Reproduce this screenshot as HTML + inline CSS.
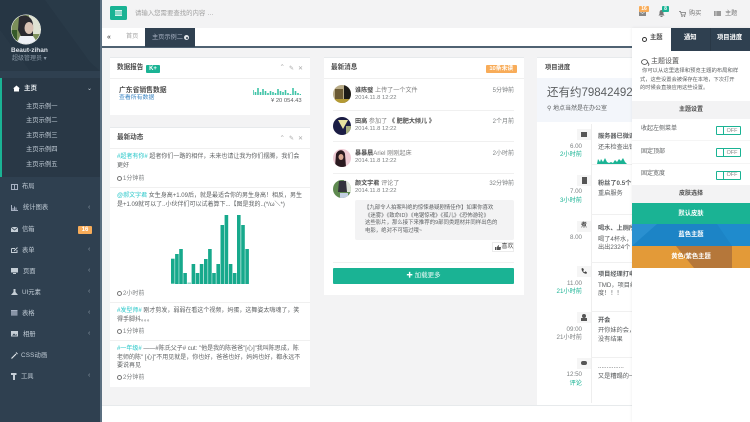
<!DOCTYPE html>
<html><head><meta charset="utf-8">
<style>
html,body{margin:0;padding:0;width:750px;height:422px;overflow:hidden;background:#f3f3f4}
body{position:relative;font-family:"Liberation Sans","Noto Sans CJK SC",sans-serif;font-size:6px;color:#5c5f61;filter:blur(.3px)}
div,span.t,svg{position:absolute}
.t{position:absolute;white-space:nowrap;line-height:10px;height:10px}
.m{color:#c0cbd5;font-size:6.3px}
.b{font-weight:bold}
.c{color:#23c6c8}
.g{color:#1ab394}
.tm{color:#7d8082}
.r{text-align:right}
.w{background:#fff}
.hd{font-size:7px;color:#4c4c4c;font-weight:bold}
.ar{color:#8a97a3;font-size:7px}
.lg{background:#f0f0f0;height:1px}
.ck{display:inline-block;width:3px;height:3px;border:1px solid #777;border-radius:50%;margin-right:1px;vertical-align:-.5px}
</style></head><body>
<!-- sidebar -->
<div style="left:0;top:0;width:100px;height:422px;background:#2f4050"></div>
<svg style="left:0;top:0" width="100" height="71"><rect width="100" height="71" fill="#263644"/><polygon points="45,0 100,0 100,71 90,62" fill="#293a48"/><polygon points="0,30 30,71 0,71" fill="#293947"/></svg>
<div style="left:100px;top:0;width:1.5px;height:422px;background:#5b6f80"></div>
<div style="left:0;top:78px;width:100px;height:99px;background:#293846"></div>
<div style="left:0;top:78px;width:2px;height:99px;background:#1ab394"></div>
<svg style="left:11px;top:14px" width="30" height="31"><defs><clipPath id="a1"><circle cx="15" cy="15.5" r="14.5"/></clipPath></defs><circle cx="15" cy="15.5" r="15" fill="#fff"/><g clip-path="url(#a1)"><rect width="30" height="31" fill="#7c8f5a"/><rect x="18" width="12" height="20" fill="#dfe3d3"/><path d="M8 3C14-1 23 3 22 13L22 22 11 24 7 16Z" fill="#2a2a30"/><ellipse cx="18" cy="14" rx="4.5" ry="6" fill="#d9c2b4"/><path d="M5 31L9 22 22 22 28 31Z" fill="#eef0f6"/><rect y="16" width="6" height="10" fill="#355a2a"/></g></svg>
<span class="t b" style="left:11px;top:46px;font-size:6.5px;color:#dfe4ea">Beaut-zihan</span>
<span class="t" style="left:12px;top:54px;font-size:6px;color:#8b9aa8">超级管理员 ▾</span>
<svg style="left:13px;top:85px" width="7" height="7"><path d="M0 3.5L3.5 .5 7 3.5 6 3.5 6 6.5 1 6.5 1 3.5Z" fill="#fff"/></svg>
<span class="t b" style="left:24px;top:84px;font-size:6.5px;color:#e8edf1">主页</span>
<span class="t" style="left:87px;top:84px;font-size:6px;color:#c5ced6">⌄</span>
<span class="t m" style="left:26px;top:102px">主页示例一</span>
<span class="t m" style="left:26px;top:116px">主页示例二</span>
<span class="t m" style="left:26px;top:131px">主页示例三</span>
<span class="t m" style="left:26px;top:145px">主页示例四</span>
<span class="t m" style="left:26px;top:160px">主页示例五</span>
<svg style="left:11px;top:184px" width="7" height="6"><rect x=".5" y=".5" width="6" height="5" fill="none" stroke="#a7b1c2"/><path d="M3.5 0V6" stroke="#a7b1c2"/></svg>
<span class="t m" style="left:22px;top:182px">布局</span>
<svg style="left:11px;top:205px" width="7" height="6"><path d="M.5 0V5.5H7M2 5V3M3.5 5V1.5M5 5V2.5" stroke="#a7b1c2" fill="none"/></svg>
<span class="t m" style="left:23px;top:203px">统计图表</span>
<span class="t ar" style="left:88px;top:203px">‹</span>
<svg style="left:11px;top:227px" width="7" height="5"><rect width="7" height="5" fill="#c5ced6"/><path d="M0 0L3.5 3 7 0" stroke="#2f4050" fill="none" stroke-width=".7"/></svg>
<span class="t m" style="left:22px;top:224.5px">信箱</span>
<div style="left:78px;top:225.5px;width:14px;height:8px;background:#f8ac59;border-radius:1px"></div>
<span class="t b" style="left:78px;top:224.5px;width:14px;text-align:center;font-size:6px;color:#fff">16</span>
<svg style="left:11px;top:247px" width="7" height="6"><path d="M.5 1.5H4M6 3V5.5H.5V1.5M3 4L6.5.5" stroke="#c5ced6" fill="none"/></svg>
<span class="t m" style="left:22px;top:245.5px">表单</span>
<span class="t ar" style="left:88px;top:245px">‹</span>
<svg style="left:11px;top:268px" width="7" height="6"><rect width="7" height="4.5" fill="#c5ced6"/><rect x="2" y="5" width="3" height="1" fill="#c5ced6"/></svg>
<span class="t m" style="left:23px;top:266.5px">页面</span>
<span class="t ar" style="left:88px;top:266px">‹</span>
<svg style="left:11px;top:289px" width="7" height="6"><path d="M2.5 0H4.5V3L7 6H0L2.5 3Z" fill="#c5ced6"/></svg>
<span class="t m" style="left:22px;top:287.5px">UI元素</span>
<span class="t ar" style="left:88px;top:287px">‹</span>
<svg style="left:11px;top:310px" width="7" height="6"><rect width="6.5" height="5.5" fill="#a7b1c2"/><path d="M0 2H6.5M0 4H6.5" stroke="#2f4050" stroke-width=".5"/></svg>
<span class="t m" style="left:22px;top:308.5px">表格</span>
<span class="t ar" style="left:88px;top:308px">‹</span>
<svg style="left:11px;top:331px" width="7" height="6"><rect width="7" height="5.5" fill="#c5ced6"/><path d="M1 4.5L3 2.5 4.5 4 5.5 3 6 4.5Z" fill="#2f4050"/></svg>
<span class="t m" style="left:23px;top:329.5px">相册</span>
<span class="t ar" style="left:88px;top:329px">‹</span>
<svg style="left:11px;top:352px" width="7" height="7"><path d="M.5 6.5L5 2" stroke="#e0e5ea" stroke-width="1.2"/><path d="M5 .5L6.5 2" stroke="#e0e5ea"/></svg>
<span class="t m" style="left:21px;top:350.5px;letter-spacing:.2px">CSS动画</span>
<svg style="left:11px;top:373px" width="6" height="7"><path d="M0 0H5.5V2H4V7H2V2H0Z" fill="#c5ced6"/></svg>
<span class="t m" style="left:21px;top:371.5px">工具</span>
<span class="t ar" style="left:88px;top:371px">‹</span>

<!-- top bar -->
<div style="left:110px;top:6px;width:17px;height:14px;background:#1ab394;border-radius:1.5px"></div>
<svg style="left:115px;top:10px" width="7" height="6"><rect width="7" height="6" fill="#d8f2ec"/><path d="M0 2H7M0 4H7" stroke="#1ab394" stroke-width=".7"/></svg>
<span class="t" style="left:135px;top:8.5px;font-size:6.4px;color:#a0a0a0">请输入您需要查找的内容 …</span>

<!-- tabs -->
<div class="w" style="left:101.5px;top:28px;width:540px;height:18px"></div>
<div style="left:101.5px;top:46px;width:540px;height:1.5px;background:#4f6272"></div>
<span class="t b" style="left:107px;top:32.5px;font-size:7px;color:#666">«</span>
<span class="t" style="left:126px;top:32px;font-size:6.2px;color:#a7a7a7">首页</span>
<div style="left:145px;top:28px;width:50px;height:19px;background:#2f4050"></div>
<span class="t" style="left:152px;top:32.5px;font-size:6.2px;color:#a7b1c2">主页示例二</span>
<div style="left:184px;top:35px;width:5px;height:5px;border-radius:50%;background:#e4e8ec"></div>
<div style="left:185.5px;top:36.5px;width:2px;height:2px;border-radius:50%;background:#2f4050"></div>

<!-- panel 1 -->
<div class="w" style="left:110px;top:56.5px;width:200px;height:58.5px;border-top:1.5px solid #e7eaec;box-sizing:border-box"></div>
<span class="t hd" style="left:117px;top:62.5px;font-size:6.6px">数据报告</span>
<div style="left:146px;top:64.5px;width:14px;height:8px;background:#1ab394;border-radius:1px"></div>
<span class="t b" style="left:146px;top:63.5px;width:14px;text-align:center;font-size:6px;color:#fff">K+</span>
<span class="t" style="left:279.5px;top:63px;font-size:6.5px;color:#a8a8a8">⌃</span>
<span class="t" style="left:289px;top:63.5px;font-size:6px;color:#a8a8a8">✎</span>
<span class="t" style="left:298px;top:63.5px;font-size:6px;color:#a8a8a8">✕</span>
<div class="lg" style="left:110px;top:78px;width:200px"></div>
<span class="t b" style="left:119px;top:86px;font-size:6.8px;color:#4c4c4c">广东省销售数据</span>
<span class="t" style="left:119px;top:93px;font-size:5.9px;color:#3f88c5">查看所有数据</span>
<svg style="left:253px;top:86px" width="48" height="10"><path d="M0 9V4M2.500 9V6M5 9V2M7.500 9V6M10 9V3M12.500 9V5M15 9V7M17.500 9V5M20 9V6M22.500 9V7M25 9V3M27.500 9V5M30 9V6M32.500 9V4M35 9V7M37.500 9V8M40 9V2M42.500 9V5M45 9V7M47.500 9V8" stroke="#3fc3a7" stroke-width="1.6"/></svg>
<span class="t" style="left:271px;top:96px;font-size:5.8px;color:#5c5f61">¥ 20 054.43</span>

<!-- panel 2 -->
<div class="w" style="left:110px;top:126.5px;width:200px;height:260.5px;border-top:1.5px solid #e7eaec;box-sizing:border-box"></div>
<span class="t hd" style="left:117px;top:133px;font-size:6.6px">最新动态</span>
<span class="t" style="left:279.5px;top:133.500px;font-size:6.5px;color:#a8a8a8">⌃</span>
<span class="t" style="left:289px;top:134px;font-size:6px;color:#a8a8a8">✎</span>
<span class="t" style="left:298px;top:134px;font-size:6px;color:#a8a8a8">✕</span>
<div class="lg" style="left:110px;top:148px;width:200px"></div>
<span class="t" style="left:117px;top:152px"><span class="c">#超者有你#</span> 超者你们一路的相伴，未来也请让我为你们摆腾，我们会</span>
<span class="t" style="left:117px;top:161px">更好</span>
<span class="t tm" style="left:117px;top:174px"><i class="ck"></i>1分钟前</span>
<div class="lg" style="left:110px;top:187px;width:200px"></div>
<span class="t" style="left:117px;top:191px"><span class="c">@郝文字君</span> 女生身高+1.09后，就是最适合你的男生身高！相反，男生</span>
<span class="t" style="left:117px;top:199.500px">是+1.09就可以了..小伙伴们可以试着算下...【图是我的..(*/ω＼*)</span>
<svg style="left:171px;top:214px" width="80" height="70" fill="#17a98c"><g>
<rect x="0" y="44.700" width="3.600" height="25"/><rect x="4.100" y="40" width="3.600" height="30"/><rect x="8.200" y="35" width="3.600" height="35"/><rect x="12.300" y="59" width="3.600" height="11"/><rect x="16.400" y="68.500" width="3.600" height="1.500" fill="#8fd9c9"/><rect x="20.600" y="50" width="3.600" height="20"/><rect x="24.700" y="59" width="3.600" height="11"/><rect x="28.800" y="50" width="3.600" height="20"/><rect x="33" y="45" width="3.600" height="25"/><rect x="37.100" y="35" width="3.600" height="35"/><rect x="41.200" y="59" width="3.600" height="11"/><rect x="45.400" y="50" width="3.600" height="20"/><rect x="49.500" y="11" width="3.600" height="59"/><rect x="53.600" y="1" width="3.600" height="69"/><rect x="57.800" y="50" width="3.600" height="20"/><rect x="61.900" y="59" width="3.600" height="11"/><rect x="66" y="1" width="3.600" height="69"/><rect x="70.200" y="11" width="3.600" height="59"/><rect x="74.300" y="35" width="3.600" height="35"/></g></svg>
<span class="t tm" style="left:117px;top:289px"><i class="ck"></i>2小时前</span>
<div class="lg" style="left:110px;top:302px;width:200px"></div>
<span class="t" style="left:117px;top:306px"><span class="c">#发型师#</span> 刚才剪发，弱弱在看这个视频，妈蛋，这舞姿太嗨魂了，笑</span>
<span class="t" style="left:117px;top:315px">得手脚抖。。。</span>
<span class="t tm" style="left:117px;top:327px"><i class="ck"></i>1分钟前</span>
<div class="lg" style="left:110px;top:340px;width:200px"></div>
<span class="t" style="left:117px;top:344px"><span class="c">#一年级#</span> ——#陈氏父子# cut: "他是我的陈爸爸"[心]"我叫陈思成，陈</span>
<span class="t" style="left:117px;top:352.500px">老师的陈" [心]"不用见就是，你也好，爸爸也好，妈妈也好，都永远不</span>
<span class="t" style="left:117px;top:360.500px">要说再见</span>
<span class="t tm" style="left:117px;top:373px"><i class="ck"></i>2分钟前</span>

<!-- center panel -->
<div class="w" style="left:324px;top:56.500px;width:200px;height:238.500px;border-top:1.500px solid #e7eaec;box-sizing:border-box"></div>
<span class="t hd" style="left:331px;top:62.500px;font-size:6.6px">最新消息</span>
<div style="left:485.500px;top:64.500px;width:31.500px;height:8px;background:#f8ac59;border-radius:1px"></div>
<span class="t b" style="left:485.500px;top:63.500px;width:31.500px;text-align:center;font-size:5.800px;color:#fff">10条未读</span>
<div class="lg" style="left:324px;top:78px;width:200px"></div>
<svg style="left:333px;top:85px" width="18" height="18"><defs><clipPath id="c"><circle cx="9" cy="9" r="9"/></clipPath></defs><g clip-path="url(#c)"><rect width="18" height="18" fill="#b9ac88"/><rect x="11" width="7" height="18" fill="#1d1b18"/><rect x="2" y="4" width="8" height="10" fill="#6b5a34"/><rect y="14" width="18" height="4" fill="#b49a34"/></g></svg>
<span class="t" style="left:355px;top:85.500px;font-size:6.100px;color:#808080"><span class="b" style="color:#4c4c4c">谁陈璧</span> 上传了一个文件</span>
<span class="t tm" style="left:355px;top:92.500px;font-size:5.800px">2014.11.8 12:22</span>
<span class="t tm r" style="left:464px;top:85.500px;width:50px">5分钟前</span>
<div class="lg" style="left:333px;top:109.500px;width:181px"></div>
<svg style="left:333px;top:117px" width="18" height="18"><defs><clipPath id="c2"><circle cx="9" cy="9" r="9"/></clipPath></defs><g clip-path="url(#c2)"><rect width="18" height="18" fill="#1b1d44"/><path d="M5 3H15L10 12Z" fill="#e6e2a0"/><rect x="13" y="9" width="5" height="9" fill="#a5ad7c"/></g></svg>
<span class="t" style="left:355px;top:117px;font-size:6.100px;color:#808080"><span class="b" style="color:#4c4c4c">田高</span> 参加了 <span class="b" style="color:#4c4c4c">《 肥肥大倾儿 》</span></span>
<span class="t tm" style="left:355px;top:124px;font-size:5.800px">2014.11.8 12:22</span>
<span class="t tm r" style="left:464px;top:117px;width:50px">2个月前</span>
<div class="lg" style="left:333px;top:141px;width:181px"></div>
<svg style="left:333px;top:149px" width="18" height="18"><defs><clipPath id="c3"><circle cx="9" cy="9" r="9"/></clipPath></defs><g clip-path="url(#c3)"><rect width="18" height="18" fill="#eecbd4"/><path d="M2 18L3 5C5 0 11 0 12 5L13 18Z" fill="#2b1a20"/><ellipse cx="8" cy="8" rx="2.500" ry="3" fill="#d8a894"/></g></svg>
<span class="t" style="left:355px;top:148.500px;font-size:6.100px;color:#808080"><span class="b" style="color:#4c4c4c">暴暴晨</span>Ariel 刚刚起床</span>
<span class="t tm" style="left:355px;top:155.500px;font-size:5.800px">2014.11.8 12:22</span>
<span class="t tm r" style="left:464px;top:148.500px;width:50px">2小时前</span>
<div class="lg" style="left:333px;top:173px;width:181px"></div>
<svg style="left:333px;top:180px" width="18" height="18"><defs><clipPath id="c4"><circle cx="9" cy="9" r="9"/></clipPath></defs><g clip-path="url(#c4)"><rect width="18" height="18" fill="#5f8a50"/><rect x="11" width="7" height="12" fill="#dfe6d8"/><path d="M6 1H13L14 12H5Z" fill="#34343c"/><rect x="7" y="13" width="8" height="5" fill="#c3cfe2"/></g></svg>
<span class="t" style="left:355px;top:179px;font-size:6.100px;color:#808080"><span class="b" style="color:#4c4c4c">颜文字君</span> 评论了</span>
<span class="t tm" style="left:355px;top:186px;font-size:5.800px">2014.11.8 12:22</span>
<span class="t tm r" style="left:464px;top:179px;width:50px">32分钟前</span>
<div style="left:355px;top:200px;width:159px;height:40px;background:#f3f3f4;border-radius:2px"></div>
<span class="t" style="left:364px;top:203px;font-size:5.400px">【九部令人拍案叫绝的惊悚悬疑剧情佳作】如果你喜欢</span>
<span class="t" style="left:365px;top:210.500px;font-size:5.400px">《迷雾》《致命ID》《电锯惊魂》《孤儿》《恐怖游轮》</span>
<span class="t" style="left:365px;top:218px;font-size:5.400px">这些影片，那么接下来推荐的9部同类题材并同样出色的</span>
<span class="t" style="left:365px;top:226px;font-size:5.400px">电影，绝对不可错过哦~</span>
<div style="left:492px;top:242px;width:22px;height:10px;border:.5px solid #ececec;box-sizing:border-box"></div>
<svg style="left:495px;top:244.500px" width="6" height="5"><path d="M0 2H1.500V5H0ZM2 2L3.500 0 4 .5 3.700 2H6L5.500 5H2Z" fill="#555"/></svg>
<span class="t" style="left:501.500px;top:242px;font-size:6px;color:#4c4c4c">喜欢</span>
<div class="lg" style="left:333px;top:261.500px;width:181px"></div>
<div style="left:333px;top:268px;width:181px;height:16px;background:#1ab394;border-radius:1px"></div>
<span class="t" style="left:333px;top:271px;width:181px;text-align:center;font-size:6.500px;color:#eafaf6"><b style="color:#fff">✚</b> 加载更多</span>

<!-- right panel -->
<div class="w" style="left:537px;top:56.500px;width:110px;height:349px;border-top:1.500px solid #e7eaec;box-sizing:border-box"></div>
<span class="t hd" style="left:545px;top:63px;font-size:6.300px">项目进度</span>
<div style="left:537px;top:78px;width:100px;height:44px;background:#f3f6fb"></div>
<span class="t" style="left:547px;top:88px;font-size:11.500px;color:#5c5f61">还有约798424922</span>
<span class="t" style="left:547px;top:104px;font-size:6px">⚲ 地点当然是在办公室</span>
<div style="left:590.500px;top:124px;width:1px;height:279px;background:#eee"></div>
<div style="left:577px;top:129px;width:14px;height:11px;background:#f5f5f5"></div>
<div style="left:581px;top:132px;width:6px;height:5px;background:#555"></div>
<span class="t tm r" style="left:552px;top:142px;width:30px;font-size:6.200px">6.00</span>
<span class="t g r" style="left:552px;top:150px;width:30px;font-size:6.200px">2小时前</span>
<span class="t b" style="left:598px;top:132px;font-size:6.200px">服务器已微调</span>
<span class="t" style="left:598px;top:143px;font-size:6.200px">还未检查出错误</span>
<svg style="left:597px;top:156px" width="30" height="8"><path d="M0 8L1 3 3 6 4 3 6 6 8 2 10 6 12 7 14 6 16 7 18 4 20 6 22 3 24 5 26 2 28 6 30 8Z" fill="#1ab394"/></svg>
<div class="lg" style="left:591px;top:164px;width:42px"></div>
<div style="left:577px;top:175px;width:14px;height:11px;background:#f5f5f5"></div>
<div style="left:582px;top:177px;width:5px;height:7px;background:#555"></div>
<span class="t tm r" style="left:552px;top:187px;width:30px;font-size:6.200px">7.00</span>
<span class="t g r" style="left:552px;top:196px;width:30px;font-size:6.200px">3小时前</span>
<span class="t b" style="left:598px;top:179px;font-size:6.200px">粉丝了0.5个</span>
<span class="t" style="left:598px;top:189px;font-size:6.200px">重启服务</span>
<div class="lg" style="left:591px;top:214px;width:42px"></div>
<div style="left:577px;top:221px;width:14px;height:11px;background:#f5f5f5"></div>
<span class="t b" style="left:581px;top:221px;font-size:6px;color:#555">煮</span>
<span class="t tm r" style="left:552px;top:233px;width:30px;font-size:6.200px">8.00</span>
<span class="t b" style="left:598px;top:224px;font-size:6.200px">喝水、上厕所</span>
<span class="t" style="left:598px;top:235px;font-size:6.200px">喝了4杯水，</span>
<span class="t" style="left:598px;top:243px;font-size:6.200px">出出2324个</span>
<div class="lg" style="left:591px;top:262px;width:42px"></div>
<div style="left:577px;top:266px;width:14px;height:11px;background:#f5f5f5"></div>
<svg style="left:581px;top:268px" width="6" height="6"><path d="M.5 .5L2 0 3 2 2 3C2.500 3.700 3 4 3.500 4.200L4.500 3.300 6 4.500 5.500 5.700C3 6 .5 3.500 .5 .5Z" fill="#444"/></svg>
<span class="t tm r" style="left:552px;top:279px;width:30px;font-size:6.200px">11.00</span>
<span class="t g r" style="left:552px;top:287px;width:30px;font-size:6.200px">21小时前</span>
<span class="t b" style="left:598px;top:270px;font-size:6.200px">项目经理打电话</span>
<span class="t" style="left:598px;top:281px;font-size:6.200px">TMD，项目经</span>
<span class="t" style="left:598px;top:289px;font-size:6.200px">度！！！</span>
<div class="lg" style="left:591px;top:311px;width:42px"></div>
<div style="left:577px;top:312px;width:14px;height:11px;background:#f5f5f5"></div>
<div style="left:582px;top:314px;width:4px;height:4px;border-radius:50%;background:#555"></div>
<div style="left:581px;top:318px;width:6px;height:3px;background:#555"></div>
<span class="t tm r" style="left:552px;top:325px;width:30px;font-size:6.200px">09:00</span>
<span class="t tm r" style="left:552px;top:333px;width:30px;font-size:6.200px">21小时前</span>
<span class="t b" style="left:598px;top:316px;font-size:6.200px">开会</span>
<span class="t" style="left:598px;top:326px;font-size:6.200px">开你妹的会，</span>
<span class="t" style="left:598px;top:335px;font-size:6.200px">没有结果</span>
<div class="lg" style="left:591px;top:357px;width:42px"></div>
<div style="left:577px;top:358px;width:14px;height:11px;background:#f5f5f5"></div>
<div style="left:581px;top:361px;width:6px;height:4px;background:#555;border-radius:2px"></div>
<span class="t tm r" style="left:552px;top:370px;width:30px;font-size:6.200px">12:50</span>
<span class="t g r" style="left:552px;top:379px;width:30px;font-size:6.200px">评论</span>
<span class="t" style="left:598px;top:362px;font-size:6.200px">...............</span>
<span class="t" style="left:598px;top:372px;font-size:6.200px">又是糟蹋的一</span>

<!-- footer -->
<div class="w" style="left:101.500px;top:405px;width:540px;height:17px;border-top:1px solid #e7eaec;box-sizing:border-box"></div>

<!-- top right icons -->
<svg style="left:639px;top:10px" width="8" height="7"><rect width="7" height="6" fill="#888"/><path d="M0 1L3.500 3.500 7 1" stroke="#eee" fill="none" stroke-width=".6"/></svg>
<div style="left:639px;top:5.500px;width:10px;height:6px;background:#f8ac59;border-radius:1px"></div>
<span class="t b" style="left:639px;top:3.500px;width:10px;text-align:center;font-size:5px;color:#fff">16</span>
<svg style="left:658px;top:10px" width="7" height="7"><path d="M3.500 0C1.500 0 1.500 2 1.500 4L.5 5.500H6.500L5.500 4C5.500 2 5.500 0 3.500 0ZM2.500 6H4.500V7H2.500Z" fill="#777"/></svg>
<div style="left:662px;top:5.500px;width:7px;height:6px;background:#1ab394;border-radius:1px"></div>
<span class="t b" style="left:662px;top:3.500px;width:7px;text-align:center;font-size:5px;color:#fff">8</span>
<svg style="left:679px;top:11px" width="7" height="6"><path d="M0 .5H1.500L2.500 4H6L6.500 1.500H2" stroke="#777" fill="none" stroke-width=".8"/><circle cx="3" cy="5.300" r=".7" fill="#777"/><circle cx="5.500" cy="5.300" r=".7" fill="#777"/></svg>
<span class="t" style="left:689px;top:9px;font-size:6.200px;color:#777">购买</span>
<svg style="left:714px;top:11px" width="7" height="5"><rect width="7" height="5" fill="#999"/><path d="M2 0V5" stroke="#f3f3f4" stroke-width=".6"/></svg>
<span class="t" style="left:725px;top:9px;font-size:6.200px;color:#777">主题</span>

<!-- theme panel -->
<div class="w" style="left:632px;top:28px;width:118px;height:394px;box-shadow:0 0 3px rgba(0,0,0,.08)"></div>
<div style="left:671px;top:28px;width:79px;height:23px;background:#2f4050"></div>
<div style="left:710px;top:28px;width:.5px;height:23px;background:#293846"></div>
<div style="left:642px;top:36.500px;width:3px;height:3px;border:1.100px solid #333;border-radius:50%"></div>
<span class="t b" style="left:650px;top:33px;font-size:6.300px;color:#4c4c4c">主题</span>
<span class="t b" style="left:684px;top:33px;font-size:6.300px;color:#fff">通知</span>
<span class="t b" style="left:717px;top:33px;font-size:6.300px;color:#fff">项目进度</span>
<svg style="left:641px;top:59px" width="9" height="7"><ellipse cx="3.500" cy="3" rx="3" ry="2.400" fill="none" stroke="#555" stroke-width=".9"/><path d="M6 3.500C8 3.500 8.500 6 7 6.500" fill="none" stroke="#555" stroke-width=".8"/></svg>
<span class="t" style="left:651px;top:57px;font-size:7px;color:#4c4c4c">主题设置</span>
<span class="t" style="left:642px;top:66px;font-size:5.350px">你可以从这里选择和预览主题的布局和样</span>
<span class="t" style="left:640px;top:74.500px;font-size:5.250px">式，这些设置会被保存在本地，下次打开</span>
<span class="t" style="left:640px;top:83px;font-size:5.250px">的时候会直接应用这些设置。</span>
<div style="left:632px;top:101px;width:118px;height:18px;background:#f3f3f4"></div>
<span class="t b" style="left:632px;top:105px;width:118px;text-align:center;font-size:6px;color:#4c4c4c">主题设置</span>
<span class="t" style="left:641px;top:124px;font-size:6px">收起左侧菜单</span>
<span class="t" style="left:641px;top:147px;font-size:6px">固定顶部</span>
<span class="t" style="left:641px;top:169px;font-size:6px">固定宽度</span>
<div class="lg" style="left:632px;top:140px;width:118px;background:#f5f5f5"></div>
<div class="lg" style="left:632px;top:163px;width:118px;background:#f5f5f5"></div>
<div style="left:716px;top:126px;width:25px;height:9px;border:1px solid #1ab394;box-sizing:border-box;border-radius:1px"></div>
<div style="left:723px;top:126px;width:1px;height:9px;background:#1ab394"></div>
<span class="t" style="left:724px;top:125.500px;width:16px;text-align:center;font-size:5.400px;color:#888">OFF</span>
<div style="left:716px;top:148px;width:25px;height:9px;border:1px solid #1ab394;box-sizing:border-box;border-radius:1px"></div>
<div style="left:723px;top:148px;width:1px;height:9px;background:#1ab394"></div>
<span class="t" style="left:724px;top:147.500px;width:16px;text-align:center;font-size:5.400px;color:#888">OFF</span>
<div style="left:716px;top:170.500px;width:25px;height:9px;border:1px solid #1ab394;box-sizing:border-box;border-radius:1px"></div>
<div style="left:723px;top:170.500px;width:1px;height:9px;background:#1ab394"></div>
<span class="t" style="left:724px;top:170px;width:16px;text-align:center;font-size:5.400px;color:#888">OFF</span>
<div style="left:632px;top:185px;width:118px;height:18px;background:#f3f3f4"></div>
<span class="t b" style="left:632px;top:189px;width:118px;text-align:center;font-size:6px;color:#4c4c4c">皮肤选择</span>
<div style="left:632px;top:203px;width:118px;height:21px;background:#1ab394"></div>
<span class="t b" style="left:632px;top:209px;width:118px;text-align:center;font-size:6.300px;color:#fff">默认皮肤</span>
<svg style="left:632px;top:224px" width="118" height="22"><rect width="118" height="22" fill="#1c84c6"/><polygon points="0,0 25,0 0,22" fill="#2a90d0"/><polygon points="85,0 118,0 118,22 100,22" fill="#1f8bcd"/></svg>
<span class="t b" style="left:632px;top:230px;width:118px;text-align:center;font-size:6.300px;color:#fff">蓝色主题</span>
<svg style="left:632px;top:246px" width="118" height="22"><rect width="118" height="22" fill="#e39a38"/><polygon points="44,0 100,0 100,22 62,22" fill="#b5773a"/></svg>
<span class="t b" style="left:632px;top:252px;width:118px;text-align:center;font-size:6.300px;color:#fff">黄色/紫色主题</span>
</body></html>
